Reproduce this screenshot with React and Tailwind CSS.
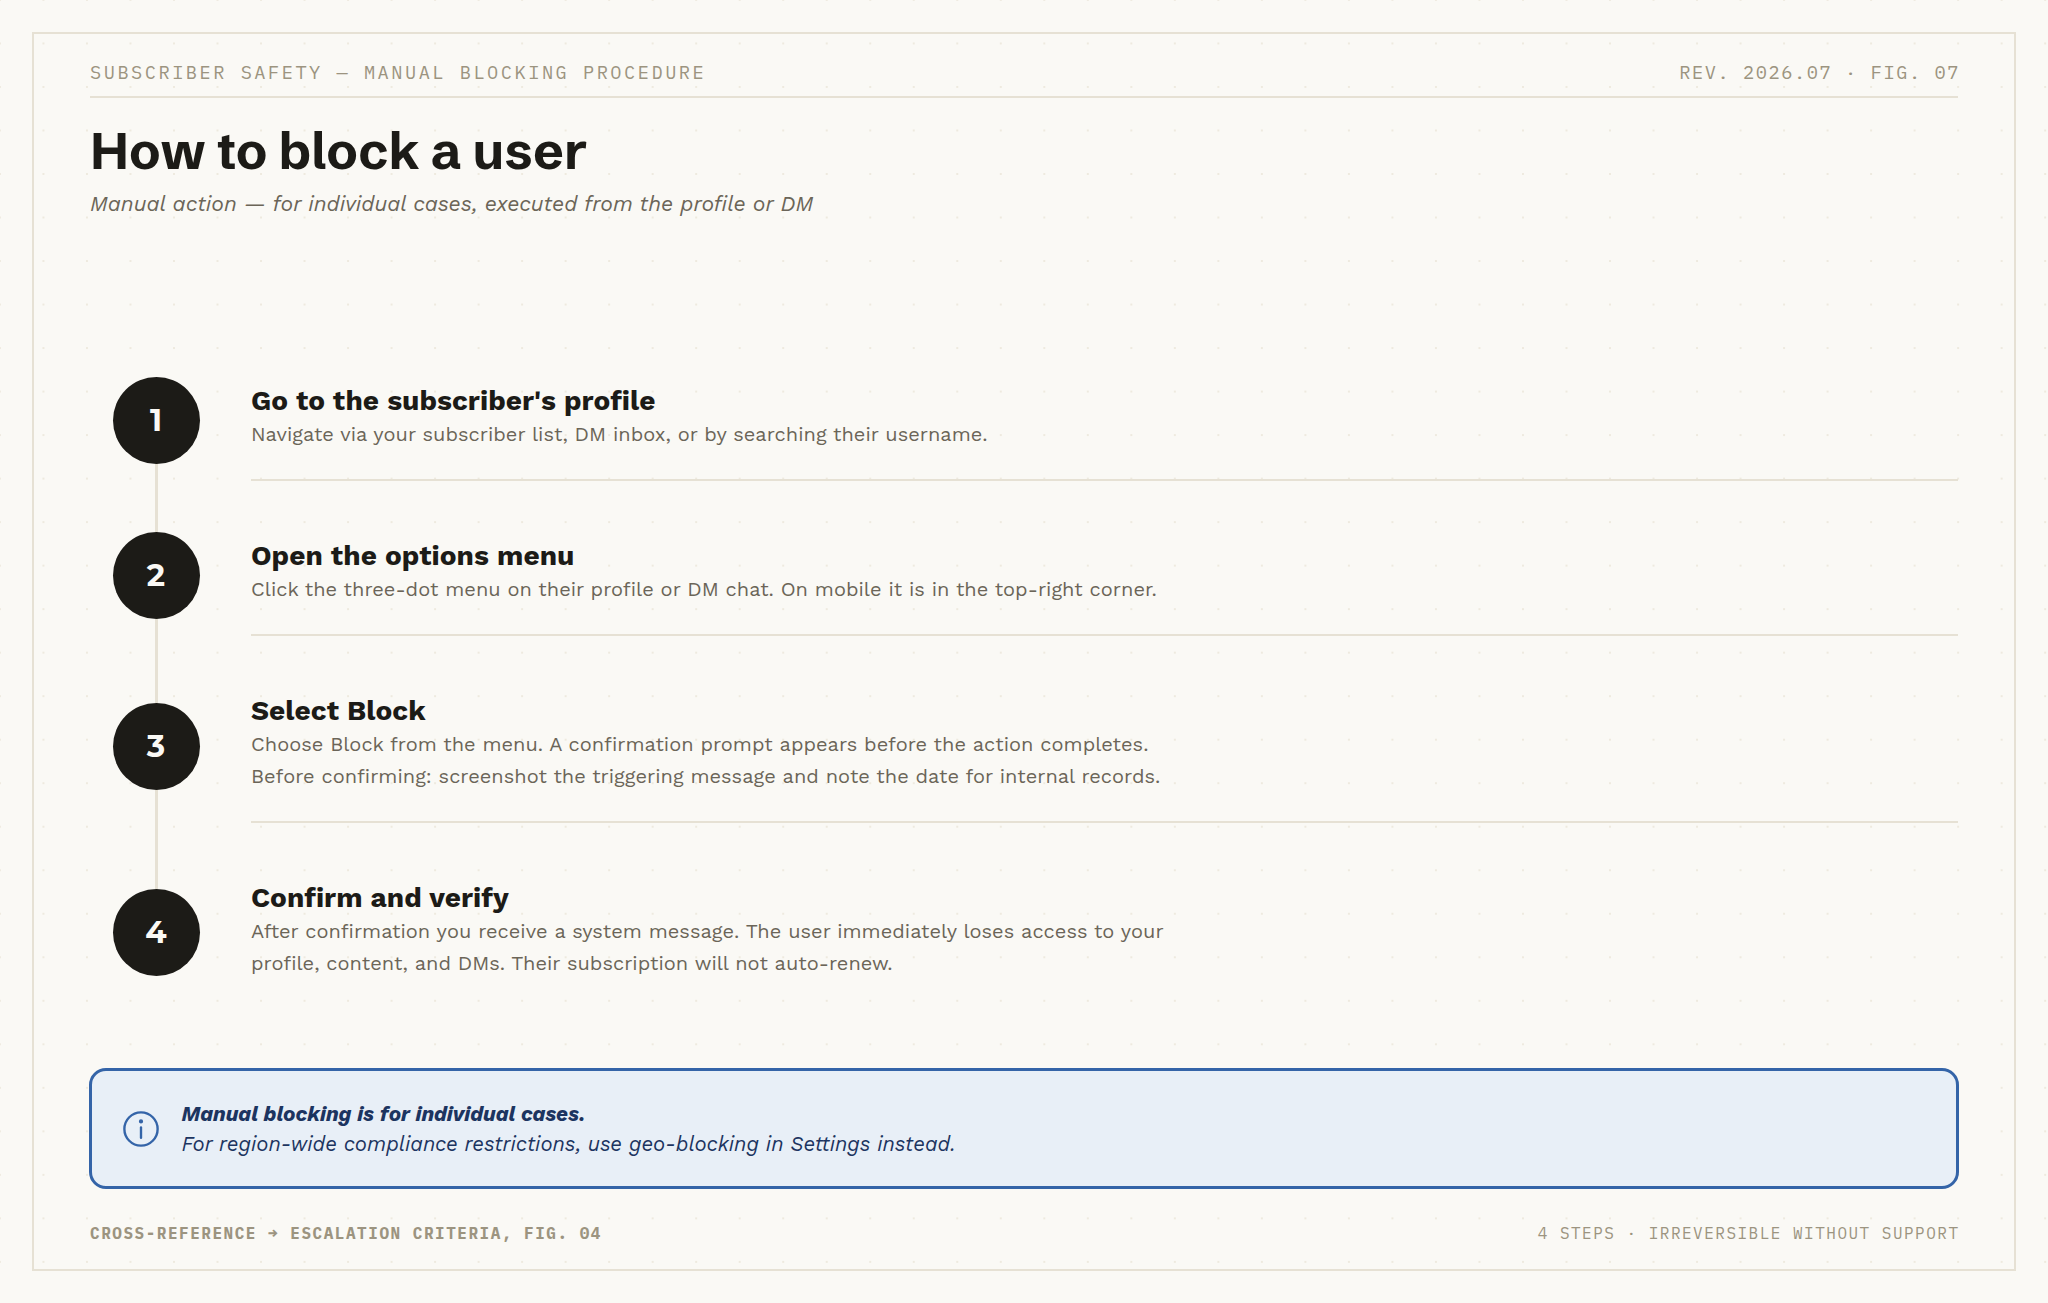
import React from "react";

const mono = "font-['IBM_Plex_Mono',monospace]";
const work = "font-['Work_Sans',sans-serif]";

const steps = [
    {
        title: "Go to the subscriber's profile",
        lines: ["Navigate via your subscriber list, DM inbox, or by searching their username."],
    },
    {
        title: "Open the options menu",
        lines: ["Click the three-dot menu on their profile or DM chat. On mobile it is in the top-right corner."],
    },
    {
        title: "Select Block",
        lines: [
            "Choose Block from the menu. A confirmation prompt appears before the action completes.",
            "Before confirming: screenshot the triggering message and note the date for internal records.",
        ],
    },
    {
        title: "Confirm and verify",
        lines: [
            "After confirmation you receive a system message. The user immediately loses access to your",
            "profile, content, and DMs. Their subscription will not auto-renew.",
        ],
    },
];

const Step = ({ number, title, lines, last }) => (
    <div className="relative flex items-center">
        {/* connector runs behind the circles */}
        {!last && <div className="absolute left-[65px] top-1/2 h-[calc(100%+33px)] w-[3px] bg-[#e6e1d4]" />}
        <div className="flex w-[132px] shrink-0 justify-center">
            <div className="relative flex h-[87px] w-[87px] items-center justify-center rounded-full bg-[#1c1b17] font-['Montserrat',sans-serif] text-[31px] font-bold text-[#faf9f5]">
                {number}
            </div>
        </div>
        <div className={`ml-[29px] flex-1 pt-[23.5px] pb-[29.5px] ${last ? "" : "border-b-2 border-[#e6e1d4]"}`}>
            <div className={`text-[28px] leading-[35px] font-bold tracking-[0.04px] text-[#1c1b17] ${work}`}>{title}</div>
            {lines.map((line) => (
                <div key={line} className={`text-[20px] leading-[32px] tracking-[0.02px] text-[#6b6558] ${work}`}>
                    {line}
                </div>
            ))}
        </div>
    </div>
);

export default function App() {
    return (
        <div className="h-screen bg-[#faf9f5] bg-[radial-gradient(circle,#eeeadf_1.2px,transparent_1.3px)] bg-[size:43.53px_43.53px] bg-[position:21.7px_21.7px] p-8">
            <div className="flex h-full flex-col border-2 border-[#e6e1d4] px-14">
                <div className={`mt-[24px] flex items-center justify-between border-b-2 border-[#e6e1d4] pb-[10px] text-[#9c9480] ${mono}`}>
                    <span className="text-[18.67px] leading-[28px] tracking-[2.5px]">SUBSCRIBER SAFETY — MANUAL BLOCKING PROCEDURE</span>
                    <span className="-mr-[2px] text-[18.67px] leading-[28px] tracking-[1.57px]">REV. 2026.07 · FIG. 07</span>
                </div>

                <h1 className="mt-[24px] font-['Schibsted_Grotesk',sans-serif] text-[51.9px] leading-[56px] font-bold text-[#1c1b17]">How to block a user</h1>
                <p className={`mt-[11px] text-[21.33px] leading-[30px] tracking-[0.02px] italic text-[#6b6558] ${work}`}>
                    Manual action — for individual cases, executed from the profile or DM
                </p>

                <div className="mt-[140px] flex flex-col gap-[33px]">
                    {steps.map((step, i) => (
                        <Step key={step.title} number={i + 1} title={step.title} lines={step.lines} last={i === steps.length - 1} />
                    ))}
                </div>

                <div className="mt-auto -mx-px flex items-center gap-[21.5px] rounded-[17px] border-[3px] border-[#3464a8] bg-[#e8eff7] py-[27px] pl-[30px]">
                    <svg width="38" height="38" viewBox="0 0 24 24" fill="none" stroke="#3464a8" strokeWidth="1.5" strokeLinecap="round">
                        <circle cx="12" cy="12" r="10.5" />
                        <line x1="12" y1="11" x2="12" y2="17.5" />
                        <circle cx="12" cy="7.2" r="0.6" fill="#3464a8" />
                    </svg>
                    <div className={`pt-[2px] leading-[29.5px] italic text-[#1c3460] ${work}`}>
                        <div className="text-[20.75px] font-bold">Manual blocking is for individual cases.</div>
                        <div className="text-[20.5px]">For region-wide compliance restrictions, use geo-blocking in Settings instead.</div>
                    </div>
                </div>

                <div className={`mt-[32px] mb-[24px] flex items-center justify-between text-[16px] leading-[24px] text-[#9c9480] ${mono}`}>
                    <span className="font-bold tracking-[1.53px]">CROSS-REFERENCE → ESCALATION CRITERIA, FIG. 04</span>
                    <span className="-mr-[1.5px] tracking-[1.5px]">4 STEPS · IRREVERSIBLE WITHOUT SUPPORT</span>
                </div>
            </div>
        </div>
    );
}
